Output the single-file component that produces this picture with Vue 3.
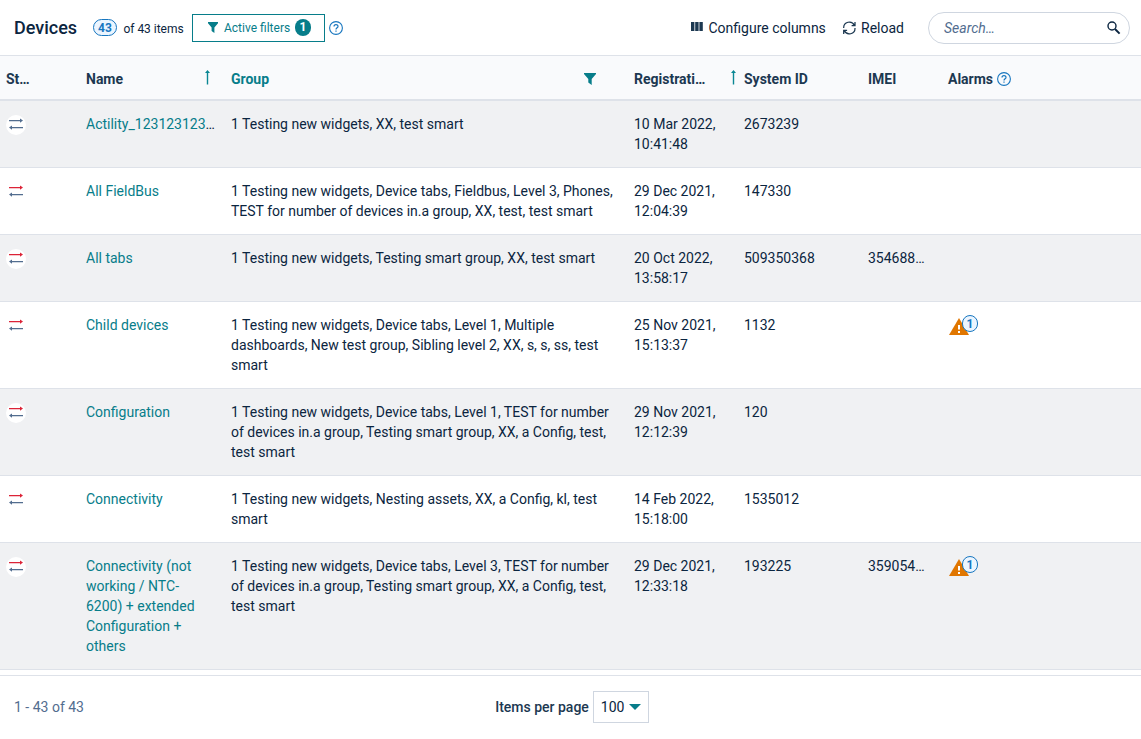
<script setup>
const rows = [
  { name: 'Actility_123123123', cut: true, off: false, group: '1 Testing new widgets, XX, test smart', date: '10 Mar 2022,', time: '10:41:48', id: '2673239' },
  { name: 'All FieldBus', off: true, group: '1 Testing new widgets, Device tabs, Fieldbus, Level 3, Phones, TEST for number of devices in.a group, XX, test, test smart', date: '29 Dec 2021,', time: '12:04:39', id: '147330' },
  { name: 'All tabs', off: true, group: '1 Testing new widgets, Testing smart group, XX, test smart', date: '20 Oct 2022,', time: '13:58:17', id: '509350368', imei: '354688…' },
  { name: 'Child devices', off: true, group: '1 Testing new widgets, Device tabs, Level 1, Multiple dashboards, New test group, Sibling level 2, XX, s, s, ss, test smart', date: '25 Nov 2021,', time: '15:13:37', id: '1132', alarms: 1 },
  { name: 'Configuration', off: true, group: '1 Testing new widgets, Device tabs, Level 1, TEST for number of devices in.a group, Testing smart group, XX, a Config, test, test smart', date: '29 Nov 2021,', time: '12:12:39', id: '120' },
  { name: 'Connectivity', off: true, group: '1 Testing new widgets, Nesting assets, XX, a Config, kl, test smart', date: '14 Feb 2022,', time: '15:18:00', id: '1535012' },
  { name: 'Connectivity (not working / NTC-6200) + extended Configuration + others', off: true, group: '1 Testing new widgets, Device tabs, Level 3, TEST for number of devices in.a group, Testing smart group, XX, a Config, test, test smart', date: '29 Dec 2021,', time: '12:33:18', id: '193225', imei: '359054…', alarms: 1 },
]
</script>

<template>
  <div class="page">
    <header class="toolbar">
      <h1>Devices</h1>
      <span class="count">43</span>
      <span class="of">of 43 items</span>
      <button class="filters">
        <svg width="10" height="11" viewBox="0 0 10 11"><path d="M0 0H10V1.2L6.4 5.6V11L3.6 9V5.6L0 1.2Z" fill="#077d8a" /></svg>
        <span>Active filters</span>
        <b>1</b>
      </button>
      <svg class="help" width="14" height="14" viewBox="0 0 14 14" fill="none" stroke="#1776bf"><circle cx="7" cy="7" r="6.4" stroke-width="1.1" /><path d="M5 5.6C5 3 9 3 9 5.4C9 6.8 7 6.8 7 8.5M7 9.4V10.7" stroke-width="1.2" /></svg>
      <div class="spacer"></div>
      <button class="action columns">
        <svg width="12" height="10" viewBox="0 0 12 10"><path d="M0 0H3.4V9H0ZM4.2 0H7.6V9H4.2ZM8.4 0H11.8V9H8.4Z" fill="#1c3851" /></svg>
        Configure columns
      </button>
      <button class="action reload">
        <svg width="15" height="14" viewBox="0 0 15 14" fill="none" stroke="#1c3851" stroke-width="1.25"><path d="M1.7 7A5.6 5.6 0 0 1 12.4 4.4M13 1V4.6H9.6M13 7A5.6 5.6 0 0 1 2.3 9.6M1.7 13V9.4H5.1" /></svg>
        Reload
      </button>
      <div class="search">
        <span>Search…</span>
        <svg width="14" height="14" viewBox="0 0 14 14" fill="none" stroke="#0b2540"><circle cx="5" cy="5" r="4" stroke-width="1.4" /><path d="M8 8L12.6 12.6" stroke-width="2" /></svg>
      </div>
    </header>

    <div class="grid head">
      <div class="cell">St…</div>
      <div class="cell sorted">Name
        <svg width="5" height="15" viewBox="0 0 5 15"><path d="M0 3L2.5 0L5 3H3.2V14.5H1.8V3Z" fill="#0a8794" /></svg>
      </div>
      <div class="cell group">Group
        <svg width="12" height="12" viewBox="0 0 12 12"><path d="M0 0H12V1L7.7 6V12L4.3 9.5V6L0 1Z" fill="#077d8a" /></svg>
      </div>
      <div class="cell sorted reg">Registrati…
        <svg width="5" height="15" viewBox="0 0 5 15"><path d="M0 3L2.5 0L5 3H3.2V14.5H1.8V3Z" fill="#0a8794" /></svg>
      </div>
      <div class="cell">System ID</div>
      <div class="cell">IMEI</div>
      <div class="cell alarms">Alarms
        <svg width="14" height="14" viewBox="0 0 14 14" fill="none" stroke="#1776bf"><circle cx="7" cy="7" r="6.4" stroke-width="1.1" /><path d="M5 5.6C5 3 9 3 9 5.4C9 6.8 7 6.8 7 8.5M7 9.4V10.7" stroke-width="1.2" /></svg>
      </div>
    </div>

    <div v-for="row in rows" :key="row.name" class="grid row">
      <div class="cell">
        <span class="status">
          <svg width="14" height="12" viewBox="0 0 14 12">
            <path :class="{ off: row.off }" d="M0 2H11V0.4L14 2.6L11 4.8V3.2H0Z" />
            <path d="M14 9H3V7.4L0 9.6L3 11.8V10.2H14Z" />
          </svg>
        </span>
      </div>
      <div class="cell name" :class="{ cut: row.cut }"><a>{{ row.name }}</a><span v-if="row.cut">…</span></div>
      <div class="cell text">{{ row.group }}</div>
      <div class="cell">{{ row.date }}<br />{{ row.time }}</div>
      <div class="cell">{{ row.id }}</div>
      <div class="cell">{{ row.imei }}</div>
      <div class="cell">
        <span v-if="row.alarms" class="alarm">
          <svg width="20" height="17" viewBox="0 0 20 17"><path d="M10 0L20 17H0Z" fill="#e07600" /><path d="M9 7H11V11.5H9ZM9 13H11V15H9Z" fill="#fff" /></svg>
          <b>{{ row.alarms }}</b>
        </span>
      </div>
    </div>

    <footer class="footer">
      <div class="range">1 - 43 of 43</div>
      <div class="pager">
        <span>Items per page</span>
        <div class="select">100
          <svg width="12" height="6" viewBox="0 0 12 6"><path d="M0 0H12L6 6Z" fill="#077d8a" /></svg>
        </div>
      </div>
      <div></div>
    </footer>
  </div>
</template>

<style>
body { margin: 0; background: #fff; overflow: hidden; }
</style>

<style scoped>
.page { width: 1141px; height: 739px; display: flex; flex-direction: column; box-sizing: border-box; font: 14px/20px Roboto, sans-serif; color: #0b2540; background: #fff; overflow: hidden; }
.page * { box-sizing: border-box; }
svg { display: block; flex: none; }
button { font: inherit; color: inherit; background: none; border: 0; padding: 0; margin: 0; display: flex; align-items: center; }
.toolbar { height: 56px; flex: none; border-bottom: 1px solid #dee2e9; display: flex; align-items: center; padding: 0 11px 0 14px; white-space: nowrap; }
h1 { margin: 0; font-size: 18px; font-weight: 500; line-height: 24px; width: 79px; }
.count { width: 24px; height: 17px; border: 1px solid #1776bf; border-radius: 9px; background: #ebf5ff; color: #1776bf; font-size: 12px; font-weight: 700; line-height: 16px; text-align: center; }
.of { font-size: 12px; margin: 2px 0 0 6.5px; width: 68.5px; letter-spacing: -0.03px; }
.filters { width: 133px; height: 28px; border: 1px solid #077d8a; color: #077d8a; font-size: 12px; padding-left: 15px; }
.filters span { margin-left: 6px; width: 71px; text-align: left; }
.filters b { width: 16px; height: 17px; border-radius: 8px; background: #077d8a; color: #fff; font-size: 12px; line-height: 17px; text-align: center; }
.help { margin-left: 4px; }
.spacer { flex: 1; }
.columns { width: 151.5px; gap: 6px; }
.columns svg { margin-top: -2px; }
.reload { width: 86px; gap: 4px; }
.search { width: 202px; height: 32px; border: 1px solid #cfd6e0; border-radius: 16px; display: flex; align-items: center; justify-content: space-between; padding: 0 8px 0 15px; font-style: italic; color: #526d8f; }
.grid { display: grid; grid-template-columns: 80px 145px 403px 110px 124px 80px 1fr; flex: none; }
.cell { padding: 0 6px; min-width: 0; }
.head { height: 45px; background: #f9fafc; border-bottom: 2px solid #dee2e9; font-weight: 700; color: #1c3851; line-height: 20px; padding-top: 13px; white-space: nowrap; }
.sorted { display: flex; justify-content: space-between; padding-right: 15px; }
.sorted svg { margin-top: 1px; }
.reg { padding-right: 2px; }
.group { display: flex; justify-content: space-between; color: #077d8a; padding-right: 32px; }
.group svg { margin-top: 4px; }
.alarms { display: flex; gap: 4px; }
.alarms svg { margin-top: 3px; }
.row { border-bottom: 1px solid #dee2e9; padding: 13px 0; }
.row:nth-of-type(even) { background: #f0f1f3; }
.status { display: flex; width: 20px; height: 20px; margin-top: 1px; padding-bottom: 2px; align-items: center; justify-content: center; border-radius: 50%; background: #fff; }
.status path { fill: #526d8f; }
.status path.off { fill: #dc2337; }
.name { padding-right: 20px; }
.name.cut { padding-right: 6px; white-space: nowrap; }
.name a { color: #077d8a; }
.text { padding-right: 14px; }
.alarm { position: relative; display: flex; width: 31px; height: 20px; }
.alarm svg { margin: 3px 0 0 1px; }
.alarm b { position: absolute; left: 14px; top: 0; width: 16px; height: 17px; border: 1px solid #1776bf; border-radius: 8px; background: #ebf5ff; color: #1776bf; font-size: 12px; line-height: 16px; text-align: center; }
.footer { margin-top: 5px; height: 63px; flex: none; border-top: 1px solid #dee2e9; display: grid; grid-template-columns: 1fr auto 1fr; align-items: center; padding: 0 11px 0 14px; }
.range { color: #526d8f; }
.pager { display: flex; align-items: center; gap: 4px; font-weight: 500; color: #1c3851; }
.select { width: 56px; height: 32px; border: 1px solid #cfd6e0; padding-left: 7px; display: flex; align-items: center; gap: 5px; font-weight: 400; color: #0b2540; }
</style>
